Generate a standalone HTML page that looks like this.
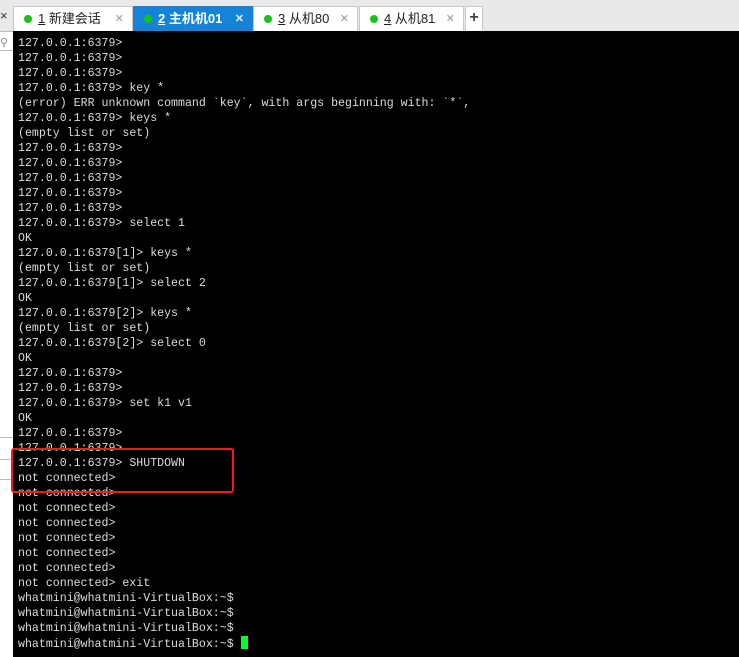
<!DOCTYPE html>
<html><head><meta charset="utf-8"><style>
*{margin:0;padding:0;box-sizing:border-box}
body{width:739px;height:657px;background:#e9e9e9;position:relative;overflow:hidden;font-family:"Liberation Sans","Noto Sans CJK SC",sans-serif}
.left{position:absolute;left:0;top:31px;width:13px;height:626px;background:#fff}
.left .l{position:absolute;left:0;width:13px;height:1px;background:#bbb}
.tab{position:absolute;top:6px;height:25px;background:#fff;border:1px solid #c8c8c8;border-bottom:none;font-size:13px;color:#222;line-height:24px;white-space:nowrap}
.tab .d{display:inline-block;width:8px;height:8px;border-radius:50%;background:#19c219;margin:0 6px 0 10px;vertical-align:0px}
.tab .x{position:absolute;right:8px;top:0;color:#999;font-size:11px}
.tab.a{background:#1583d8;color:#fff;border-color:#1583d8;font-weight:bold}
.tab.a .x{color:#dfefff}
u{text-decoration:underline}
.term{position:absolute;left:13px;top:31px;width:726px;height:626px;background:#000}
pre{position:absolute;left:18px;top:36px;font-family:"Liberation Mono",monospace;font-size:11.6px;line-height:15px;color:#dcdcdc}
.box{position:absolute;left:11px;top:448px;width:223px;height:45px;border:2px solid #f01c1c;border-radius:3px}
.cur{display:inline-block;width:7px;height:13px;background:#00ff30;vertical-align:-2px}
</style></head><body>
<div style="position:absolute;left:0;top:8px;font-size:13px;color:#333">×</div>
<div class="left"><div style="position:absolute;left:0;top:5px;color:#888;font-size:11px">⚲</div><div class="l" style="top:0"></div><div class="l" style="top:19px"></div><div class="l" style="top:406px"></div><div class="l" style="top:428px"></div><div class="l" style="top:448px"></div></div>
<div class="tab" style="left:13px;width:120px"><span class="d"></span><u>1</u> 新建会话<span class="x">✕</span></div>
<div class="tab a" style="left:133px;width:120px"><span class="d"></span><u>2</u> 主机机01<span class="x">✕</span></div>
<div class="tab" style="left:253px;width:105px"><span class="d"></span><u>3</u> 从机80<span class="x">✕</span></div>
<div class="tab" style="left:359px;width:105px"><span class="d"></span><u>4</u> 从机81<span class="x">✕</span></div>
<div class="tab" style="left:465px;width:18px;text-align:center;font-size:16px;font-weight:bold;color:#444;line-height:22px">+</div>
<div class="term"></div>
<pre>127.0.0.1:6379>
127.0.0.1:6379>
127.0.0.1:6379>
127.0.0.1:6379> key *
(error) ERR unknown command `key`, with args beginning with: `*`,
127.0.0.1:6379> keys *
(empty list or set)
127.0.0.1:6379>
127.0.0.1:6379>
127.0.0.1:6379>
127.0.0.1:6379>
127.0.0.1:6379>
127.0.0.1:6379> select 1
OK
127.0.0.1:6379[1]> keys *
(empty list or set)
127.0.0.1:6379[1]> select 2
OK
127.0.0.1:6379[2]> keys *
(empty list or set)
127.0.0.1:6379[2]> select 0
OK
127.0.0.1:6379>
127.0.0.1:6379>
127.0.0.1:6379> set k1 v1
OK
127.0.0.1:6379>
127.0.0.1:6379>
127.0.0.1:6379> SHUTDOWN
not connected>
not connected>
not connected>
not connected>
not connected>
not connected>
not connected>
not connected> exit
whatmini@whatmini-VirtualBox:~$
whatmini@whatmini-VirtualBox:~$
whatmini@whatmini-VirtualBox:~$
whatmini@whatmini-VirtualBox:~$ <span class="cur"></span></pre>
<div class="box"></div>
</body></html>
